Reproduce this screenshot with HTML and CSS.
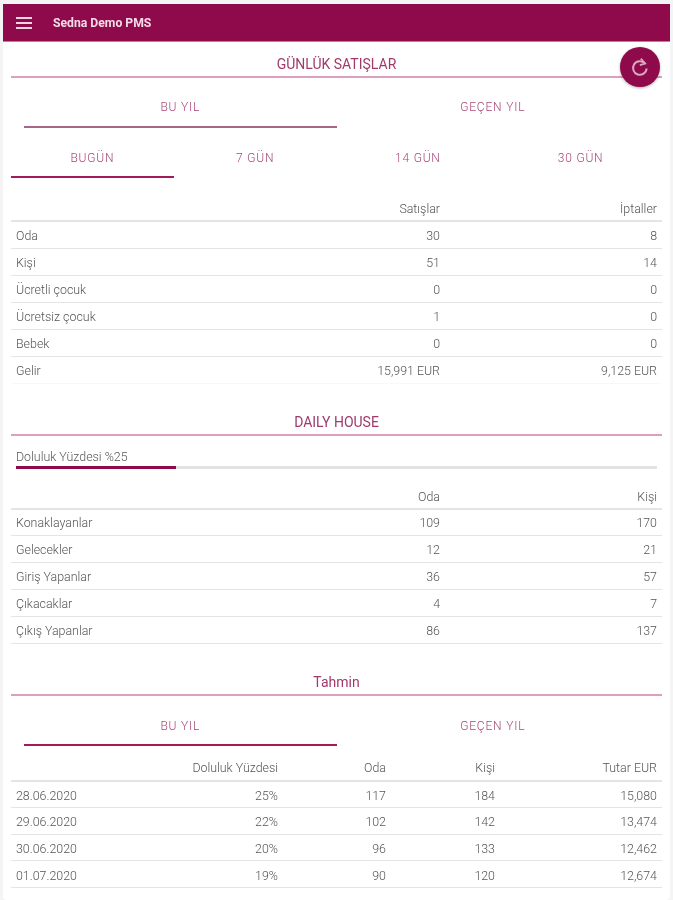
FILE: index.html
```html
<!DOCTYPE html>
<html lang="en">
<head>
    <meta charset="UTF-8">
    <meta name="viewport" content="width=device-width, initial-scale=1.0">
    <title>Sedna Demo PMS</title>
    <link rel="stylesheet" href="styles.css">
</head>
<body>
    <div class="page">
        <header class="topbar">
            <svg class="menu-icon" width="18" height="14" viewBox="0 0 18 14">
                <path d="M1 2h16M1 7h16M1 12h16" stroke="#f0d3e1" stroke-width="2"/>
            </svg>
            <span class="topbar-title">Sedna Demo PMS</span>
        </header>

        <button class="refresh-btn">
            <svg width="24" height="24" viewBox="0 0 24 24" fill="none" stroke="#dba6c1" stroke-width="2">
                <path d="M16.8 8.4A6.8 6.8 0 1 0 18.6 13.5"/>
                <path d="M12.8 3.6l4.4 5-5.4 1.6" stroke-width="1.8"/>
            </svg>
        </button>

        <main class="content">
            <h2 class="section-title">GÜNLÜK SATIŞLAR</h2>
            <div class="tabs tabs-year">
                <div class="tab active-grey">BU YIL</div>
                <div class="tab">GEÇEN YIL</div>
            </div>
            <div class="tabs tabs-range">
                <div class="tab active">BUGÜN</div>
                <div class="tab">7 GÜN</div>
                <div class="tab">14 GÜN</div>
                <div class="tab">30 GÜN</div>
            </div>
            <table class="list list-sales">
                <thead>
                    <tr><th></th><th>Satışlar</th><th>İptaller</th></tr>
                </thead>
                <tbody>
                    <tr><td>Oda</td><td>30</td><td>8</td></tr>
                    <tr><td>Kişi</td><td>51</td><td>14</td></tr>
                    <tr><td>Ücretli çocuk</td><td>0</td><td>0</td></tr>
                    <tr><td>Ücretsiz çocuk</td><td>1</td><td>0</td></tr>
                    <tr><td>Bebek</td><td>0</td><td>0</td></tr>
                    <tr class="last"><td>Gelir</td><td>15,991 EUR</td><td>9,125 EUR</td></tr>
                </tbody>
            </table>

            <h2 class="section-title section-house">DAILY HOUSE</h2>
            <div class="occupancy">
                <div class="occupancy-label">Doluluk Yüzdesi %25</div>
                <div class="occupancy-bar"><div class="occupancy-fill" style="width: 25%"></div></div>
            </div>
            <table class="list list-house">
                <thead>
                    <tr><th></th><th>Oda</th><th>Kişi</th></tr>
                </thead>
                <tbody>
                    <tr><td>Konaklayanlar</td><td>109</td><td>170</td></tr>
                    <tr><td>Gelecekler</td><td>12</td><td>21</td></tr>
                    <tr><td>Giriş Yapanlar</td><td>36</td><td>57</td></tr>
                    <tr><td>Çıkacaklar</td><td>4</td><td>7</td></tr>
                    <tr><td>Çıkış Yapanlar</td><td>86</td><td>137</td></tr>
                </tbody>
            </table>

            <h2 class="section-title section-forecast">Tahmin</h2>
            <div class="tabs tabs-year tabs-forecast">
                <div class="tab active">BU YIL</div>
                <div class="tab">GEÇEN YIL</div>
            </div>
            <table class="list list-forecast">
                <thead>
                    <tr><th></th><th>Doluluk Yüzdesi</th><th>Oda</th><th>Kişi</th><th>Tutar EUR</th></tr>
                </thead>
                <tbody>
                    <tr><td>28.06.2020</td><td>25%</td><td>117</td><td>184</td><td>15,080</td></tr>
                    <tr><td>29.06.2020</td><td>22%</td><td>102</td><td>142</td><td>13,474</td></tr>
                    <tr><td>30.06.2020</td><td>20%</td><td>96</td><td>133</td><td>12,462</td></tr>
                    <tr><td>01.07.2020</td><td>19%</td><td>90</td><td>120</td><td>12,674</td></tr>
                </tbody>
            </table>
        </main>
    </div>
</body>
</html>
```

FILE: styles.css
```css
*{
    margin: 0;
    padding: 0;
    box-sizing: border-box;
    font-family: Roboto, 'Liberation Sans', sans-serif;
}
body{
    background-color: #f4f4f4;
    overflow: hidden;
}
.page{
    position: relative;
    width: 667px;
    height: 896px;
    margin: 4px 3px 0;
    background-color: white;
    border-radius: 0 0 4px 4px;
    filter: blur(0.5px);
}
.topbar{
    display: flex;
    align-items: center;
    height: 38px;
    padding-left: 12px;
    background-color: #8e0a4b;
    border-bottom: 1px solid #c77a9f;
}
.menu-icon{
    margin-right: 20px;
}
.topbar-title{
    padding-top: 1px;
    color: #f3dce7;
    font-size: 12.2px;
    font-weight: 700;
}
.refresh-btn{
    position: absolute;
    top: 43px;
    right: 10px;
    display: flex;
    align-items: center;
    justify-content: center;
    width: 40px;
    height: 40px;
    border: none;
    border-radius: 50%;
    background-color: #8e0a4b;
    box-shadow: 0 1px 3px rgba(0,0,0,0.3);
}
.content{
    padding: 0 8px;
}
.section-title{
    height: 36px;
    padding-top: 14px;
    line-height: 16px;
    border-bottom: 2px solid #dd9fbe;
    text-align: center;
    font-size: 14px;
    font-weight: 400;
    color: #a03a6c;
}
.tabs{
    display: flex;
}
.tab{
    flex: 1;
    text-align: center;
    font-size: 12px;
    font-weight: 300;
    letter-spacing: 0.8px;
    color: #a8487a;
    border-bottom: 2px solid transparent;
}
.tabs-year{
    padding: 0 13px;
    height: 50px;
}
.tabs-year .tab{
    height: 50px;
    padding-top: 22px;
    line-height: 14px;
}
.tabs-forecast .tab{
    padding-top: 23px;
}
.tabs-range{
    height: 50px;
}
.tabs-range .tab{
    height: 50px;
    padding-top: 23px;
    line-height: 14px;
}
.tab.active{
    border-bottom-color: #a3195b;
}
.tab.active-grey{
    border-bottom-color: #a5668a;
}
table.list{
    width: 100%;
    border-collapse: collapse;
    table-layout: fixed;
}
.list th,.list td{
    padding: 0 5px;
    height: 27px;
    text-align: right;
    font-size: 12.4px;
    font-weight: 300;
    color: #555555;
    border-bottom: 1px solid #e4e4e4;
}
.list td:first-child{
    text-align: left;
}
.list th{
    border-bottom-width: 2px;
}
.list tr.last td{
    border-bottom-color: #f8f8f8;
}
.list-sales td,.list-forecast td{
    padding-top: 2px;
}
.list-sales thead th{
    height: 43px;
    padding-top: 19px;
}
.list-sales th:first-child{
    width: 210px;
}
.list-sales th:nth-child(2){
    width: 224px;
}
.section-house{
    margin-top: 16px;
}
.occupancy{
    padding: 14px 5px 0;
    height: 38px;
}
.occupancy-label{
    font-size: 12.4px;
    font-weight: 300;
    line-height: 14px;
    color: #555555;
}
.occupancy-bar{
    height: 3px;
    margin-top: 2px;
    background-color: #e3e3e3;
}
.occupancy-fill{
    height: 100%;
    background-color: #8e0a4b;
}
.list-house thead th{
    height: 35px;
    padding-top: 12px;
}
.list-house th:first-child{
    width: 210px;
}
.list-house th:nth-child(2){
    width: 224px;
}
.section-forecast{
    margin-top: 16px;
}
.list-forecast thead th{
    height: 35px;
    padding-top: 8px;
}
.list-forecast td{
    height: 26.6px;
}
.list-forecast th:first-child{
    width: 100px;
}
.list-forecast th:nth-child(2){
    width: 172px;
}
.list-forecast th:nth-child(3){
    width: 108px;
}
.list-forecast th:nth-child(4){
    width: 109px;
}
```
